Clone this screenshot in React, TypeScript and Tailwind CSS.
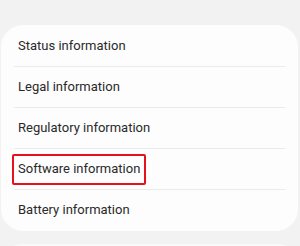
const items = [
  "Status information",
  "Legal information",
  "Regulatory information",
  "Software information",
  "Battery information",
];

export default function App() {
  return (
    <div
      className="w-[300px] h-[246px] overflow-hidden bg-[#f2f2f2] pt-[25px] pl-[1px] pr-[2px]"
      style={{ fontFamily: "Roboto, 'Noto Sans', sans-serif" }}
    >
      <div className="bg-[#fdfdfd] rounded-[22px] pt-[1px] pb-[1px]">
        {items.map((item, i) => (
          <div key={item}>
            {i > 0 && <div className="mx-[13px] h-px bg-[#ebebeb]" />}
            <div className="h-[40px] flex items-center px-[11px]">
              <span
                className={
                  i === 3
                    ? "h-[31px] flex items-center px-[4px] border-2 border-[#e3121c] rounded-[2px] text-[13px] text-[#2a2a2a]"
                    : "px-[6px] text-[13px] text-[#2a2a2a]"
                }
              >
                {item}
              </span>
            </div>
          </div>
        ))}
      </div>
      <div className="mt-[13px] ml-[1px] h-[20px] bg-[#f9f9f9] rounded-t-[22px]" />
    </div>
  );
}
